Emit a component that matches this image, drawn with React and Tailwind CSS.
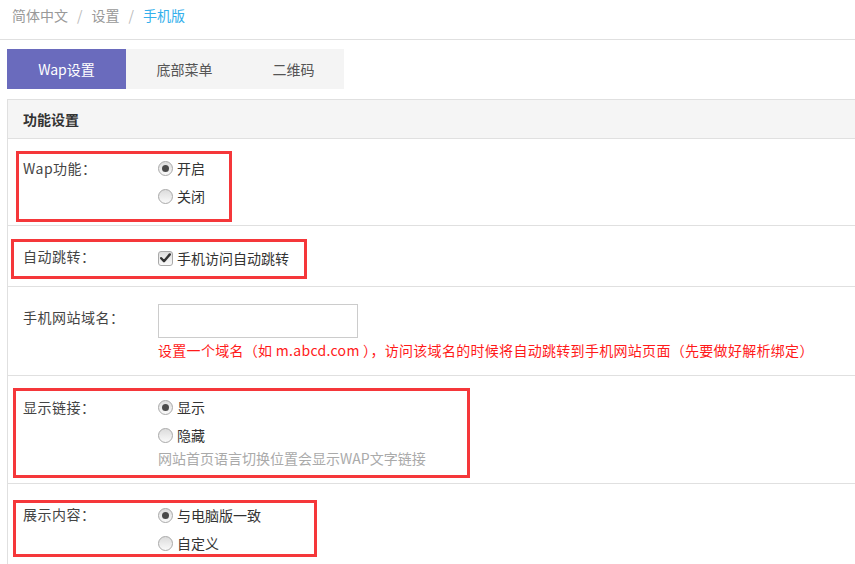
import React from 'react';

const Radio = ({ checked, label }) => (
  <label className="flex items-center h-[24px] text-[14px] text-[#333]">
    <span className="w-[15px] h-[15px] rounded-full border border-[#a9a9a9] bg-gradient-to-b from-[#dcdcdc] to-[#fafafa] flex items-center justify-center mr-[4px]">
      {checked && <span className="w-[7px] h-[7px] rounded-full bg-[#4a4a4a]" />}
    </span>
    {label}
  </label>
);

const Checkbox = ({ label }) => (
  <label className="flex items-center h-[24px] text-[14px] text-[#333]">
    <span className="w-[15px] h-[15px] rounded-[3px] border border-[#a9a9a9] bg-gradient-to-b from-[#dcdcdc] to-[#fafafa] flex items-center justify-center mr-[4px]">
      <svg width="11" height="10" viewBox="0 0 11 10">
        <path d="M1.2 5.2 L4 8.2 L9.8 1.4" fill="none" stroke="#333" strokeWidth="2.4" strokeLinecap="round" strokeLinejoin="round" />
      </svg>
    </span>
    {label}
  </label>
);

// red annotation frame drawn over the row
const Mark = ({ className }) => (
  <div className={`absolute border-[3px] border-[#f5373a] pointer-events-none ${className}`} />
);

const Row = ({ label, children, className = '', mark }) => (
  <div className={`relative flex border-t border-[#e0e0e0] pl-[15px] ${className}`}>
    {mark}
    <div className="w-[135px] shrink-0 leading-[20px] text-[14px] text-[#444] tracking-[0.5px]">{label}</div>
    <div className="flex flex-col">{children}</div>
  </div>
);

export default function App() {
  return (
    <div className="w-[855px] h-[564px] overflow-hidden bg-white font-['Noto_Sans_CJK_SC',sans-serif]">
      {/* Breadcrumb */}
      <div className="h-[40px] border-b border-[#e0e0e0] pl-[12px] flex items-start pt-[5px] text-[14px] leading-[20px] text-[#999]">
        <span>简体中文</span>
        <span className="mx-[9px] text-[#bbb]">/</span>
        <span>设置</span>
        <span className="mx-[9px] text-[#bbb]">/</span>
        <span className="text-[#35b0ec]">手机版</span>
      </div>

      {/* Tabs */}
      <div className="pl-[7px] pt-[9px]">
        <div className="flex w-max bg-[#f4f4f4] text-[14px] h-[40px]">
          <div className="w-[119px] flex items-center justify-center bg-[#6a6bbd] text-white">Wap设置</div>
          <div className="w-[117px] flex items-center justify-center text-[#555]">底部菜单</div>
          <div className="w-[101px] flex items-center justify-center text-[#555]">二维码</div>
        </div>
      </div>

      {/* Panel */}
      <div className="ml-[7px] mt-[10px] border-l border-t border-[#e0e0e0]">
        <div className="h-[38px] bg-[#f5f5f5] flex items-center pl-[15px] text-[14px] font-bold text-[#333]">功能设置</div>

        <Row
          label="Wap功能："
          className="pt-[19px] pb-[17px]"
          mark={<Mark className="top-[12px] left-[8px] w-[216px] h-[71px]" />}
        >
          <div className="-mt-[2px] flex flex-col gap-[4px]">
            <Radio checked label="开启" />
            <Radio label="关闭" />
          </div>
        </Row>

        <Row
          label="自动跳转："
          className="pt-[20px] pb-[16px]"
          mark={<Mark className="top-[13px] left-[3px] w-[296px] h-[40px]" />}
        >
          <Checkbox label="手机访问自动跳转" />
        </Row>

        <Row label="手机网站域名：" className="pt-[20px] pb-[15px]">
          <input className="-mt-[3px] w-[200px] h-[34px] border border-[#ccc] outline-none" />
          <div className="mt-[2px] leading-[20px] text-[14px] text-[#ff1a1a] whitespace-nowrap tracking-[0.3px]">
            设置一个域名（如 m.abcd.com ），访问该域名的时候将自动跳转到手机网站页面（先要做好解析绑定）
          </div>
        </Row>

        <Row
          label="显示链接："
          className="pt-[21px] pb-[15px]"
          mark={<Mark className="top-[12px] left-[5px] w-[457px] h-[90px]" />}
        >
          <div className="-mt-[2px] flex flex-col gap-[4px]">
            <Radio checked label="显示" />
            <Radio label="隐藏" />
          </div>
          <div className="mt-[1px] leading-[20px] text-[14px] text-[#aaa]">网站首页语言切换位置会显示WAP文字链接</div>
        </Row>

        <Row
          label="展示内容："
          className="pt-[20px] pb-[16px]"
          mark={<Mark className="top-[16px] left-[5px] w-[304px] h-[57px]" />}
        >
          <div className="-mt-[1px] flex flex-col gap-[4px]">
            <Radio checked label="与电脑版一致" />
            <Radio label="自定义" />
          </div>
        </Row>
      </div>
    </div>
  );
}
